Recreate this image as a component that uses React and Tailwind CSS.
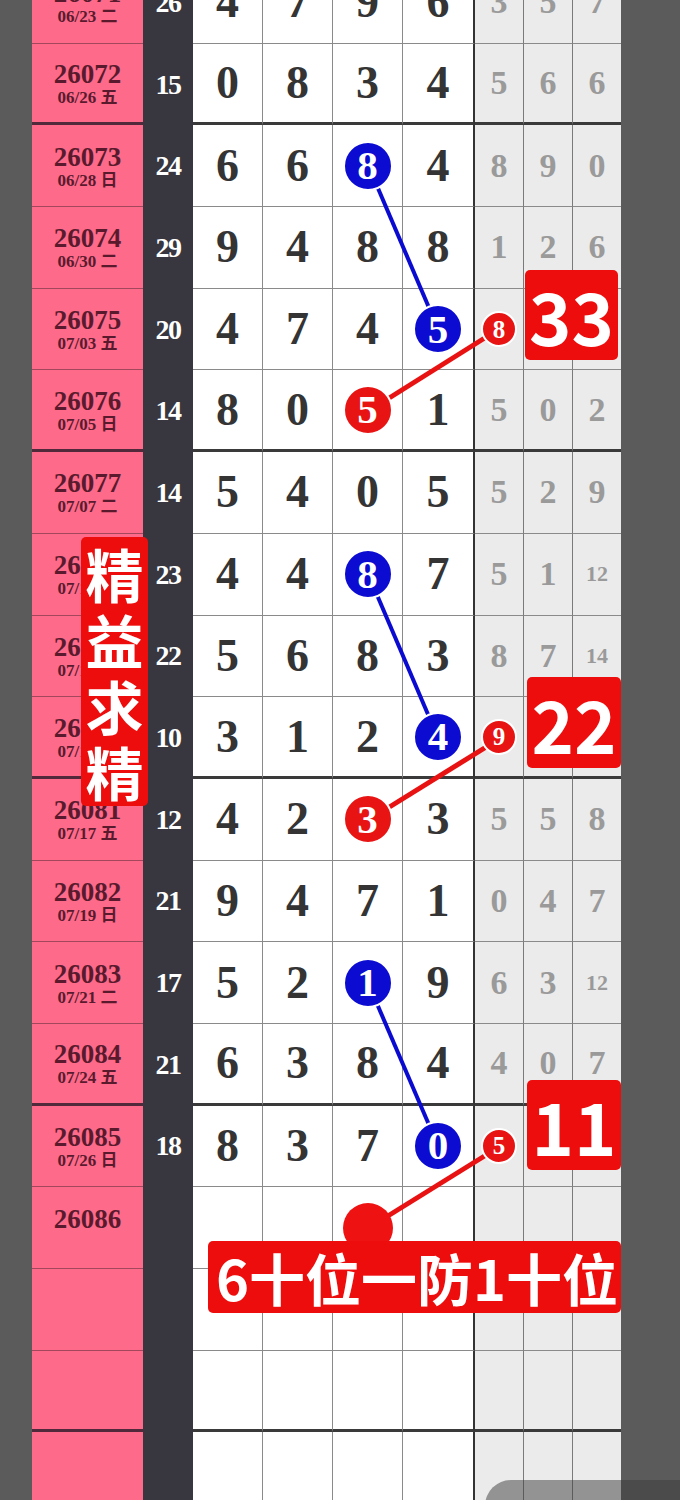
import React from 'react'

const SERIF = { fontFamily: '"Liberation Serif", "Noto Sans CJK SC", serif' }
const CJK = { fontFamily: '"Noto Sans CJK SC", "Noto Sans", sans-serif' }

// blue / red = index of the white cell that gets a circle, hit = small red ball in first grey cell
const ROWS = [
  { id: '26071', date: '06/23 二', sum: 26, d: [4, 7, 9, 6], g: [3, 5, 7] },
  { id: '26072', date: '06/26 五', sum: 15, d: [0, 8, 3, 4], g: [5, 6, 6] },
  { id: '26073', date: '06/28 日', sum: 24, d: [6, 6, 8, 4], g: [8, 9, 0], blue: 2 },
  { id: '26074', date: '06/30 二', sum: 29, d: [9, 4, 8, 8], g: [1, 2, 6] },
  { id: '26075', date: '07/03 五', sum: 20, d: [4, 7, 4, 5], g: [], blue: 3, hit: 8 },
  { id: '26076', date: '07/05 日', sum: 14, d: [8, 0, 5, 1], g: [5, 0, 2], red: 2 },
  { id: '26077', date: '07/07 二', sum: 14, d: [5, 4, 0, 5], g: [5, 2, 9] },
  { id: '26078', date: '07/10 五', sum: 23, d: [4, 4, 8, 7], g: [5, 1, 12], blue: 2 },
  { id: '26079', date: '07/12 日', sum: 22, d: [5, 6, 8, 3], g: [8, 7, 14] },
  { id: '26080', date: '07/14 二', sum: 10, d: [3, 1, 2, 4], g: [], blue: 3, hit: 9 },
  { id: '26081', date: '07/17 五', sum: 12, d: [4, 2, 3, 3], g: [5, 5, 8], red: 2 },
  { id: '26082', date: '07/19 日', sum: 21, d: [9, 4, 7, 1], g: [0, 4, 7] },
  { id: '26083', date: '07/21 二', sum: 17, d: [5, 2, 1, 9], g: [6, 3, 12], blue: 2 },
  { id: '26084', date: '07/24 五', sum: 21, d: [6, 3, 8, 4], g: [4, 0, 7] },
  { id: '26085', date: '07/26 日', sum: 18, d: [8, 3, 7, 0], g: [], blue: 3, hit: 5 },
  { id: '26086', date: '', sum: '', d: [], g: [], dot: 2 },
  { id: '', date: '', sum: '', d: [], g: [] },
  { id: '', date: '', sum: '', d: [], g: [] },
  { id: '', date: '', sum: '', d: [], g: [] },
]

const LINES = [
  { x1: 368.5, y1: 166, x2: 438.5, y2: 330, c: '#0a0ad0', w: 4 },
  { x1: 368.5, y1: 411, x2: 499, y2: 329, c: '#e81212', w: 5 },
  { x1: 368.5, y1: 575, x2: 438.5, y2: 739, c: '#0a0ad0', w: 4 },
  { x1: 368.5, y1: 820, x2: 499, y2: 739, c: '#e81212', w: 5 },
  { x1: 368.5, y1: 984, x2: 438.5, y2: 1147, c: '#0a0ad0', w: 4 },
  { x1: 368.5, y1: 1228, x2: 499, y2: 1147, c: '#e81212', w: 5 },
]

function Ball({ v, color }) {
  return (
    <span
      className={`relative z-20 flex h-[50px] w-[50px] items-center justify-center rounded-full border-2 border-white text-[41px] font-bold leading-none text-white ${
        color === 'blue' ? 'bg-[#0b0bd2]' : 'bg-[#e81414]'
      }`}
      style={SERIF}
    >
      {v}
    </span>
  )
}

function Row({ row, i }) {
  const thick = i % 4 === 1
  const lineB = thick ? 'border-b-[3px] border-[#3a3a3a]' : 'border-b border-[#8a8a8a]'
  return (
    <div className="flex h-[81.7px]">
      {/* issue + date */}
      <div
        className={`flex w-[111px] flex-col items-center justify-center pt-[3px] bg-[#fe6a8a] text-[#5a1a2e] ${
          thick ? 'border-b-[3px] border-[#52293a]' : 'border-b border-[#a3475d]'
        }`}
        style={SERIF}
      >
        <span className="text-[27px] font-bold leading-[27px]">{row.id}</span>
        <span className="text-[17px] font-bold leading-[20px]">{row.date || '\u00a0'}</span>
      </div>
      {/* sum */}
      <div
        className="flex w-[50px] items-center justify-center bg-[#38373f] text-[28px] font-bold tracking-[-1.5px] text-white"
        style={SERIF}
      >
        {row.sum}
      </div>
      {/* four positions */}
      {[0, 1, 2, 3].map(c => (
        <div
          key={c}
          className={`flex items-center justify-center bg-white ${lineB} ${
            c === 3 ? 'w-[72px] border-r-2 border-r-[#333]' : 'w-[70px] border-r border-r-[#8a8a8a]'
          }`}
        >
          {row.blue === c ? (
            <Ball v={row.d[c]} color="blue" />
          ) : row.red === c ? (
            <Ball v={row.d[c]} color="red" />
          ) : row.dot === c ? (
            <span className="relative z-20 h-[50px] w-[50px] rounded-full bg-[#ee1212]" />
          ) : (
            <span className="text-[46px] font-bold leading-none text-[#343434]" style={SERIF}>
              {row.d[c]}
            </span>
          )}
        </div>
      ))}
      {/* grey span columns */}
      {[0, 1, 2].map(c => (
        <div
          key={c}
          className={`flex items-center justify-center bg-[#ebebeb] ${lineB} ${
            c < 2 ? 'w-[49px] border-r border-r-[#7a7a7a]' : 'w-[48px]'
          }`}
        >
          {c === 0 && row.hit !== undefined ? (
            <span
              className="relative z-20 flex h-[36px] w-[36px] items-center justify-center rounded-full border-2 border-white bg-[#e81414] text-[25px] font-bold leading-none text-white"
              style={SERIF}
            >
              {row.hit}
            </span>
          ) : (
            <span
              className={`font-bold leading-none text-[#9a9a9a] ${row.g[c] > 9 ? 'text-[22px]' : 'text-[34px]'}`}
              style={SERIF}
            >
              {row.g[c]}
            </span>
          )}
        </div>
      ))}
    </div>
  )
}

function Badge({ text, className }) {
  return (
    <div
      className={`absolute z-30 flex items-center justify-center rounded-[5px] bg-[#ee0d0d] text-[72px] font-bold leading-none text-white ${className}`}
      style={CJK}
    >
      {text}
    </div>
  )
}

export default function App() {
  return (
    <div className="relative h-[1500px] w-[680px] overflow-hidden bg-[#5b5b5b]">
      <div className="ml-[32px] mt-[-38px] w-[589px]">
        {ROWS.map((row, i) => (
          <Row key={i} row={row} i={i} />
        ))}
      </div>

      {/* trend lines */}
      <svg className="pointer-events-none absolute left-0 top-0 z-10" width="680" height="1500">
        {LINES.map((l, i) => (
          <line key={i} x1={l.x1} y1={l.y1} x2={l.x2} y2={l.y2} stroke={l.c} strokeWidth={l.w} />
        ))}
      </svg>

      <Badge text="33" className="left-[525px] top-[270px] h-[90px] w-[93px]" />
      <Badge text="22" className="left-[527px] top-[677px] h-[91px] w-[94px]" />
      <Badge text="11" className="left-[527px] top-[1080px] h-[90px] w-[94px]" />

      <div
        className="absolute left-[81px] top-[537px] z-30 flex h-[269px] w-[67px] flex-col items-center justify-center rounded-[5px] bg-[#ee0d0d] text-[58px] font-bold leading-[66px] text-white"
        style={CJK}
      >
        <span>精</span>
        <span>益</span>
        <span>求</span>
        <span>精</span>
      </div>

      <div
        className="absolute left-[208px] top-[1241px] z-30 flex h-[72px] w-[413px] items-center rounded-[5px] bg-[#ee0d0d] pl-[8px] text-[56px] font-bold leading-none text-white"
        style={CJK}
      >
        6十位一防1十位
      </div>

      <div className="absolute left-[485px] top-[1480px] z-30 h-[40px] w-[220px] rounded-tl-[26px] bg-[#3c3c3c]/50" />
    </div>
  )
}
